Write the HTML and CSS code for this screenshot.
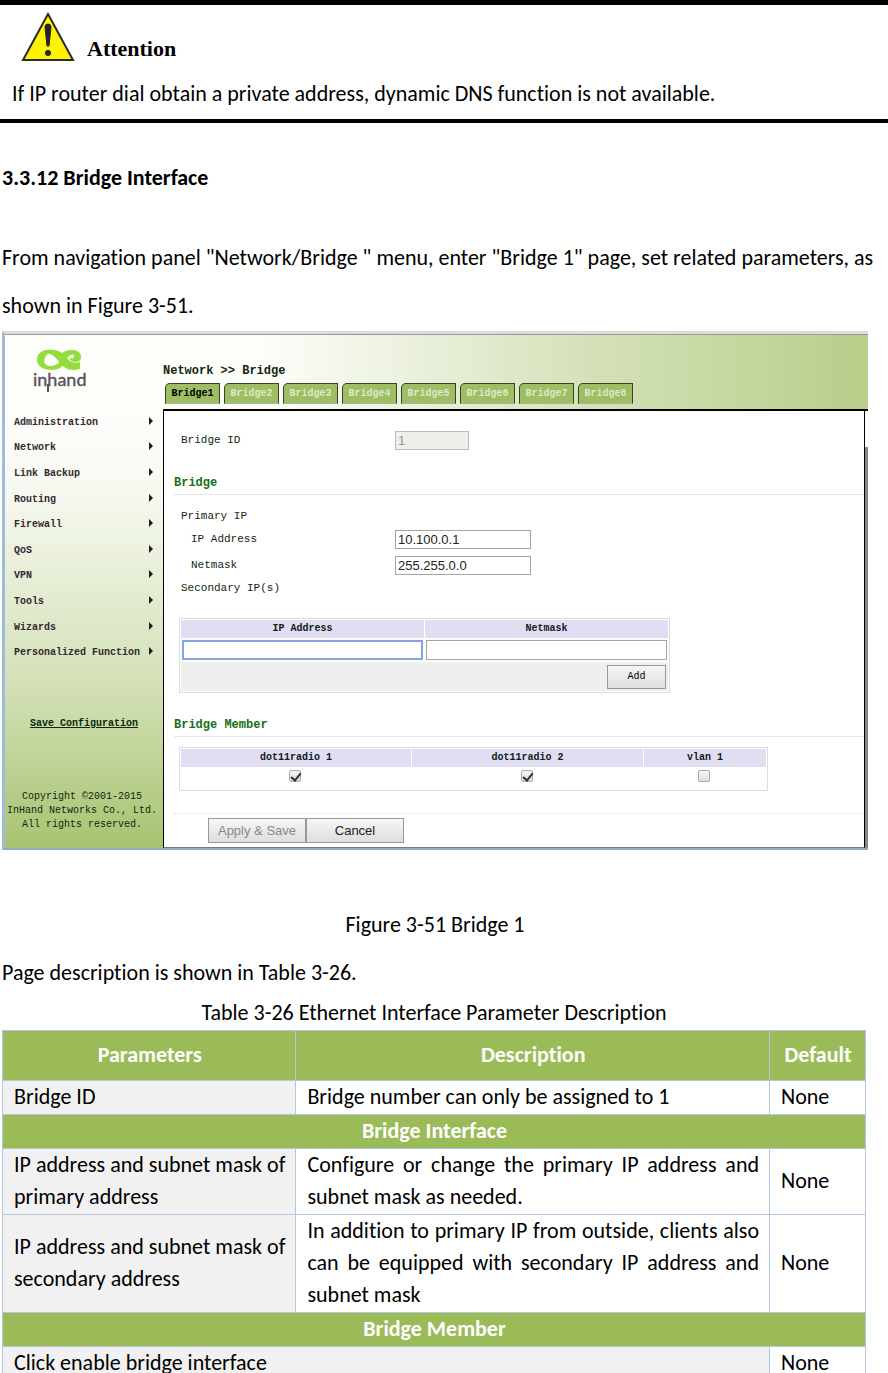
FILE: index.html
```html
<!DOCTYPE html>
<html lang="en">
<head>
<meta charset="utf-8">
<title>3.3.12 Bridge Interface</title>
<link rel="stylesheet" href="styles.css">
</head>
<body>
<aside class="attention">
  <div class="attention-title">
    <svg class="warning" viewBox="0 0 54 50" width="54" height="50" aria-hidden="true">
      <path d="M27 2 L52 48 H2 Z" fill="#fff200" stroke="#2a2a2a" stroke-width="2"/>
      <path d="M24 15 Q24 12 27 12 Q30 12 30 15 L28 34 H26 Z" fill="#222" stroke="#222" stroke-width="1"/>
      <circle cx="27" cy="41" r="3" fill="#222"/>
    </svg>
    <strong>Attention</strong>
  </div>
  <p>If IP router dial obtain a private address, dynamic DNS function is not available.</p>
</aside>

<main class="doc">
  <h1>3.3.12 Bridge Interface</h1>
  <p class="intro">From navigation panel "Network/Bridge " menu, enter "Bridge 1" page, set related parameters, as shown in Figure 3-51.</p>

  <section class="window">
    <header class="banner">
      <div class="logo">
        <svg viewBox="0 0 60 46" width="60" height="46" role="img" aria-label="inhand">
          <path d="M19 1 C10 0 5 5 5 11 C5 17 11 21 20 21 C27 21 31 17 34 14 L30 10 C27 14 24 17 18 17 C13 17 11 13 13 9 C14 6 16 4 20 4 Z" fill="#93de3c"/>
          <path d="M17 1 C26 0 31 4 35 9 C38 13 42 15 48 13 V20 C38 23 32 19 27 13 C24 9 22 6 17 5 Z" fill="#93de3c"/>
          <path d="M29 5 C33 1 37 1 41 1 C46 1 49 4 49 8 C49 11 47 13 43 13 C40 13 38 11 37 9 C40 10 42 9 42 7 C42 5 39 5 36 8 L34 10 Z" fill="#93de3c"/>
          <text x="1" y="37" class="logo-text">inhand</text>
          <path d="M16 35 V43" stroke="#5c5358" stroke-width="2"/>
        </svg>
      </div>
      <div class="banner-main">
        <div class="crumbs">Network &gt;&gt; Bridge</div>
        <nav class="tabs">
          <button type="button" class="tab active">Bridge1</button>
          <button type="button" class="tab">Bridge2</button>
          <button type="button" class="tab">Bridge3</button>
          <button type="button" class="tab">Bridge4</button>
          <button type="button" class="tab">Bridge5</button>
          <button type="button" class="tab">Bridge6</button>
          <button type="button" class="tab">Bridge7</button>
          <button type="button" class="tab">Bridge8</button>
        </nav>
      </div>
    </header>
    <div class="window-body">
      <div class="sidebar">
        <nav class="menu">
          <a href="#">Administration</a>
          <a href="#">Network</a>
          <a href="#">Link Backup</a>
          <a href="#">Routing</a>
          <a href="#">Firewall</a>
          <a href="#">QoS</a>
          <a href="#">VPN</a>
          <a href="#">Tools</a>
          <a href="#">Wizards</a>
          <a href="#">Personalized Function</a>
        </nav>
        <a class="save" href="#">Save Configuration</a>
        <p class="copyright">Copyright ©2001-2015<br>InHand Networks Co., Ltd.<br>All rights reserved.</p>
      </div>
      <form class="panel">
        <div class="field field-id"><label for="bid">Bridge ID</label><input id="bid" class="short" type="text" value="1" disabled></div>
        <h2>Bridge</h2>
        <div class="group">Primary IP</div>
        <div class="field sub"><label for="ip">IP Address</label><input id="ip" type="text" value="10.100.0.1"></div>
        <div class="field sub"><label for="mask">Netmask</label><input id="mask" type="text" value="255.255.0.0"></div>
        <div class="group">Secondary IP(s)</div>
        <table class="grid ips">
          <thead><tr><th id="c-ip">IP Address</th><th id="c-mask">Netmask</th></tr></thead>
          <tbody>
            <tr><td><input class="focused" type="text" aria-labelledby="c-ip"></td><td><input type="text" aria-labelledby="c-mask"></td></tr>
            <tr class="actions"><td colspan="2"><button type="button" class="btn add">Add</button></td></tr>
          </tbody>
        </table>
        <h2>Bridge Member</h2>
        <table class="grid members">
          <thead><tr><th id="m1">dot11radio 1</th><th id="m2">dot11radio 2</th><th id="m3">vlan 1</th></tr></thead>
          <tbody><tr>
            <td><input type="checkbox" aria-labelledby="m1" checked></td>
            <td><input type="checkbox" aria-labelledby="m2" checked></td>
            <td><input type="checkbox" aria-labelledby="m3"></td>
          </tr></tbody>
        </table>
        <div class="buttons">
          <button type="button" class="btn" disabled>Apply &amp; Save</button><button type="button" class="btn">Cancel</button>
        </div>
      </form>
      <div class="gutter"></div>
    </div>
  </section>

  <p class="caption">Figure 3-51 Bridge 1</p>
  <p class="note">Page description is shown in Table 3-26.</p>

  <table class="params">
    <caption>Table 3-26 Ethernet Interface Parameter Description</caption>
    <colgroup><col class="c1"><col class="c2"><col class="c3"></colgroup>
    <thead><tr><th>Parameters</th><th>Description</th><th>Default</th></tr></thead>
    <tbody>
      <tr><td class="name">Bridge ID</td><td>Bridge number can only be assigned to 1</td><td>None</td></tr>
      <tr><th colspan="3">Bridge Interface</th></tr>
      <tr><td class="name">IP address and subnet mask of primary address</td><td>Configure or change the primary IP address and subnet mask as needed.</td><td>None</td></tr>
      <tr><td class="name">IP address and subnet mask of secondary address</td><td>In addition to primary IP from outside, clients also can be equipped with secondary IP address and subnet mask</td><td>None</td></tr>
      <tr><th colspan="3">Bridge Member</th></tr>
      <tr><td class="name" colspan="2">Click enable bridge interface</td><td>None</td></tr>
    </tbody>
  </table>
</main>
</body>
</html>
```

FILE: styles.css
```css
* { box-sizing: border-box; }
html { overflow-x: hidden; scrollbar-width: none; }
body {
  margin: 0;
  background: #fff;
  color: #000;
  font: 22px/32px Carlito, Lato, sans-serif;
  font-variant-ligatures: none;
}
p, h1, h2 { margin: 0; }

.attention {
  border-top: 5px solid #000;
  border-bottom: 4px solid #000;
  padding: 7px 12px 9px;
}
.attention-title {
  display: flex;
  align-items: flex-end;
  gap: 12px;
  padding: 0 9px;
  margin-bottom: 16px;
}
.warning { display: block; }
.attention strong { font: bold 22px/26px "Liberation Serif", serif; }

.doc { padding: 0 20px 0 2px; }
h1 { font-size: 22px; line-height: 32px; margin: 39px 0 40px; }
.intro { line-height: 48px; margin-right: -12px; }
.caption { text-align: center; line-height: 48px; margin-top: 51px; }
.note { line-height: 48px; }

/* Router configuration window */
.window {
  margin-top: 1px;
  border-top: 3px solid #dcdcdc;
  border-left: 3px solid #9dbbe0;
  border-bottom: 2px solid #91a8c6;
  color: #10280f;
  font: 11px/16px "Liberation Mono", monospace;
}
.banner {
  display: flex;
  height: 75px;
  border-top: 1px solid #999;
  background: linear-gradient(to right, #fdfdfa 30%, #d4e1b8 68%, #b8ce89);
}
.logo { width: 158px; padding: 14px 0 0 27px; flex: none; }
.logo svg { display: block; overflow: visible; }
.logo-text { font: 18px Lato, sans-serif; fill: #5c5358; stroke: #5c5358; stroke-width: 0.4px; }
.crumbs { font-size: 12px; font-weight: bold; padding-top: 28px; line-height: 16px; }
.tabs { display: flex; gap: 4px; padding: 4px 2px 0; }
.tab {
  width: 55px;
  height: 21px;
  padding: 0;
  border: 1px solid #35452b;
  border-bottom-color: #a9b49a;
  border-top-left-radius: 5px;
  background: #9fbe63;
  color: #dde8c8;
  font: bold 10px "Liberation Mono", monospace;
}
.tab.active { color: #000; }

.window-body { display: flex; }
.sidebar {
  width: 158px;
  flex: none;
  display: flex;
  flex-direction: column;
  font-size: 10px;
  background: linear-gradient(#fdfdfa, #f8faf3 16%, #d4e1b8 62%, #a8c370);
}
.menu {
  display: grid;
  grid-auto-rows: 1fr;
  height: 256px;
}
.menu a {
  display: flex;
  align-items: center;
  justify-content: space-between;
  padding: 2px 10px 0 9px;
  color: #35292f;
  font-weight: bold;
  text-decoration: none;
}
.menu a::after {
  content: "";
  border: 4px solid transparent;
  border-left-color: #1c1c1c;
  border-right: 0;
  margin-bottom: 4px;
}
.save { color: #0d2a0a; font-weight: bold; text-align: center; margin-top: 51px; }
.copyright { margin-top: 58px; padding-right: 4px; text-align: center; line-height: 14px; white-space: nowrap; }

.panel {
  flex: 1;
  border: 1px solid #000;
  border-top-width: 2px;
  border-bottom-color: #777;
  background: #fff;
  padding: 20px 0 4px 10px;
}
.gutter { width: 3px; background: linear-gradient(#fff 36px, #888 36px); border-top: 2px solid #000; }
.field { display: flex; align-items: center; padding-left: 7px; height: 26px; }
.field label { width: 214px; }
.field.sub label { width: 204px; }
.field.sub { padding-left: 17px; }
.field-id { height: 18px; }
.group { padding-left: 7px; line-height: 20px; }
.panel input[type="text"] {
  width: 136px;
  height: 19px;
  padding: 0 2px;
  border: 1px solid #a5a5a5;
  background: #fff;
  color: #222;
  font: 13px "Liberation Sans", sans-serif;
}
.panel input.short { width: 74px; background: #efefeb; color: #999; border-color: #bbb; }
.panel h2 {
  font-size: 12px;
  line-height: 16px;
  color: #167016;
  border-bottom: 1px solid #e6e6e6;
  padding-bottom: 3px;
}
.field-id + h2 { margin: 26px 0 11px; }

.grid {
  border: 1px solid #ddd;
  border-collapse: separate;
  border-spacing: 1px;
  margin-left: 5px;
  font-size: 10px;
}
.grid th { height: 18px; padding: 0; background: #e1def4; color: #10201a; }
.ips { width: 491px; margin-top: 20px; margin-bottom: 24px; table-layout: fixed; }
.ips td { padding: 1px; height: 22px; background: #fbfbfb; }
.panel .ips input { display: block; width: 100%; height: 20px; }
.panel .ips input.focused { border: 2px solid #84a5df; }
.ips .actions td { height: 29px; background: #efefef; text-align: right; padding: 0 2px; }
.members { width: 589px; margin-top: 10px; table-layout: fixed; }
.members th:first-child { width: 230px; }
.members th:nth-child(2) { width: 231px; }
.members td { height: 21px; padding: 2px 2px 0 0; text-align: center; vertical-align: top; }
.members input {
  appearance: none;
  display: inline-block;
  position: relative;
  width: 12px;
  height: 12px;
  margin: 0;
  border: 1px solid #aaa;
  border-radius: 2px;
  background: linear-gradient(#f5f5f5, #ddd);
}
.members input:checked::after {
  content: "";
  position: absolute;
  left: 3px;
  top: 0;
  width: 4px;
  height: 8px;
  border: solid #333;
  border-width: 0 2px 2px 0;
  transform: rotate(40deg);
}
.buttons { display: flex; border-top: 1px dotted #ddd; margin-top: 22px; padding: 4px 0 0 34px; }
.btn {
  width: 98px;
  height: 25px;
  padding: 0;
  border: 1px solid #999;
  background: linear-gradient(#f6f6f6, #dedede);
  color: #222;
  font: 13px "Liberation Sans", sans-serif;
}
.btn:disabled { color: #888; }
.btn.add { width: 59px; height: 24px; font: 10px "Liberation Mono", monospace; color: #000; }

/* Parameter table */
.params {
  width: 864px;
  max-width: 100%;
  border-collapse: collapse;
  table-layout: fixed;
}
.params caption { line-height: 32px; padding-bottom: 1px; }
.c1 { width: 34%; }
.c3 { width: 96px; }
.params th, .params td { border: 1px solid #b4c6e0; padding: 0 10px 1px 11px; }
.params th { background: #9bbb59; color: #fff; }
.params thead th { height: 50px; }
.params td { text-align: justify; }
.params .name { background: #f1f1f1; }
```
